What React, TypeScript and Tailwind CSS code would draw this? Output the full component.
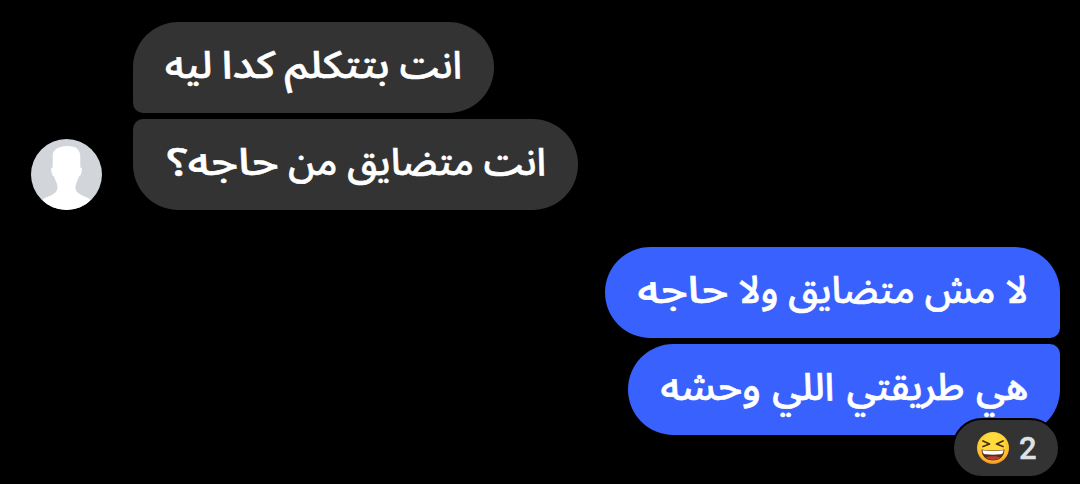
import React from 'react';

type Word = {
  text: string;
  stretch?: string;
};

type Message = {
  words: Word[];
  bubble: string;
};

const incoming: Message[] = [
  {
    words: [
      { text: 'انت' },
      { text: 'بتتكلم', stretch: 'ml-[11px] scale-x-[1.12]' },
      { text: 'كدا', stretch: 'ml-[7px] scale-x-[1.16]' },
      { text: 'ليه', stretch: 'scale-x-[1.07]' },
    ],
    bubble: 'w-[361px] rounded-[46px] rounded-bl-[10px]',
  },
  {
    words: [
      { text: 'انت' },
      { text: 'متضايق' },
      { text: 'من' },
      { text: 'حاجه؟', stretch: 'scale-x-[1.19]' },
    ],
    bubble: 'w-[445px] rounded-[46px] rounded-tl-[10px]',
  },
];

const outgoing: Message[] = [
  {
    words: [
      { text: 'لا' },
      { text: 'مش' },
      { text: 'متضايق' },
      { text: 'ولا' },
      { text: 'حاجه', stretch: 'scale-x-[1.19]' },
    ],
    bubble: 'w-[455px] rounded-[46px] rounded-br-[10px]',
  },
  {
    words: [
      { text: 'هي', stretch: 'ml-0.5 scale-x-[1.02]' },
      { text: 'طريقتي', stretch: 'ml-[5px] scale-x-[1.02]' },
      { text: 'اللي', stretch: 'ml-[3px] scale-x-[1.03]' },
      { text: 'وحشه', stretch: 'scale-x-[1.07]' },
    ],
    bubble: 'w-[432px] rounded-[46px] rounded-tr-[10px]',
  },
];

const Bubble: React.FC<{ message: Message; color: string }> = ({ message, color }) => (
  <div dir="rtl" className={`flex h-[91.500px] items-center px-8 pb-0.5 text-white ${color} ${message.bubble}`}>
    <span className="whitespace-nowrap text-[38px] leading-none font-medium [-webkit-text-stroke:0.6px_white]">
      {message.words.map((word, i) => (
        <React.Fragment key={i}>
          {i > 0 && ' '}
          <span className={`inline-block origin-right ${word.stretch ?? ''}`}>{word.text}</span>
        </React.Fragment>
      ))}
    </span>
  </div>
);

const Avatar = () => (
  <svg className="h-[71px] w-[71px] shrink-0 rounded-full" viewBox="0 0 72 72">
    <rect width="72" height="72" fill="#d2d5da" />
    <path
      fill="#fff"
      d="M37 7c-9 0-15 3.500-15 10v12c-1.600 0-1.800 1-1.500 3 .5 3.500 1 5.500 3 6 1 4 2.800 6.500 3.300 9.500.6 4-1.300 7-5.300 9-3.500 1.800-7 2.500-9.500 4.500v11h48V61c-2.500-2-6-2.700-9.500-4.500-4-2-6-5-5.300-9 .5-3 2.300-5.500 3.300-9.500 2-.5 2.500-2.500 3-6 .3-2 .1-3-1.500-3V18c0-7-4-11-13-11z"
    />
  </svg>
);

const LaughIcon = () => (
  <svg className="h-8 w-8" viewBox="0 0 32 32">
    <defs>
      <radialGradient id="face" cx="50%" cy="38%" r="62%">
        <stop offset="0.5" stopColor="#ffdc3c" />
        <stop offset="0.85" stopColor="#fdbb2c" />
        <stop offset="1" stopColor="#ef8420" />
      </radialGradient>
    </defs>
    <circle cx="16" cy="16" r="16" fill="url(#face)" />
    <path d="M6 9 12.500 12 6 14.500M26 9 19.500 12 26 14.500" fill="none" stroke="#4b2c13" strokeWidth="1.800" strokeLinecap="round" strokeLinejoin="round" />
    <path d="M4.500 17.500c7 1.300 16 1.300 23 0 0 6.500-4.500 11-11.500 11s-11.500-4.500-11.500-11z" fill="#5b2a16" />
    <path d="M5.500 18.200c6 1.100 15 1.100 21 0 0 2.600-1 3.900-3 4.100-5 .6-10 .6-15 0-2-.2-3-1.500-3-4.100z" fill="#fff" />
    <path d="M8.500 25.500c3.500-1.700 11.500-1.700 15 0-4 3.300-11 3.300-15 0z" fill="#b8402f" />
  </svg>
);

const App: React.FC = () => (
  <div className="flex h-[484px] w-[1080px] flex-col overflow-hidden bg-black pt-[21.500px] font-['Noto_Sans_Arabic','DejaVu_Sans',sans-serif]">
    <div className="flex items-end gap-[31px] pl-[31px]">
      <Avatar />
      <div className="flex flex-col gap-[5.500px]">
        {incoming.map((m, i) => <Bubble key={i} message={m} color="bg-[#333333]" />)}
      </div>
    </div>

    <div className="relative mt-[36.500px] flex flex-col items-end gap-[5.500px] pr-5">
      {outgoing.map((m, i) => <Bubble key={i} message={m} color="bg-[#3861fe]" />)}

      {/* Reactions */}
      <div className="absolute right-0 top-[171.500px] mr-5 flex h-[60px] w-[108px] items-center gap-2.5 rounded-full border-2 border-black bg-[#333333] pl-[23px]">
        <LaughIcon />
        <span className="font-['Roboto',sans-serif] text-[31px] leading-none font-medium text-[#dfe1e5] [-webkit-text-stroke:0.4px_#dfe1e5]">2</span>
      </div>
    </div>
  </div>
);

export default App;
